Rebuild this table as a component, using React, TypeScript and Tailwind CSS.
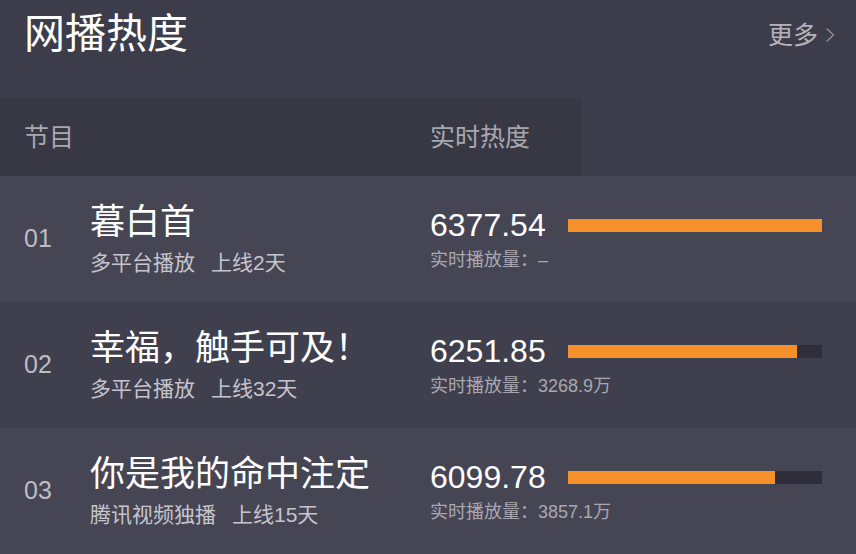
const items = [
  { rank: "01", title: "暮白首", platform: "多平台播放", days: "上线2天", score: "6377.54", plays: "–", pct: 100 },
  { rank: "02", title: "幸福，触手可及！", platform: "多平台播放", days: "上线32天", score: "6251.85", plays: "3268.9万", pct: 90 },
  { rank: "03", title: "你是我的命中注定", platform: "腾讯视频独播", days: "上线15天", score: "6099.78", plays: "3857.1万", pct: 81.5 },
]

const cjk = "font-['PingFang_SC','Liberation_Sans','Noto_Sans_CJK_SC',sans-serif]"

export default function App() {
  return (
    <div className={`w-[856px] h-[554px] bg-[#3d3c4a] flex flex-col overflow-hidden ${cjk}`}>
      <div className="h-[98px] flex items-start justify-between pl-6 pr-[21px]">
        <h1 className="mt-[12px] text-[41px] leading-[44px] text-white">网播热度</h1>
        <a className="mt-[20px] flex items-center text-[25px] leading-[30px] text-[#b4b3bc]">
          更多
          <svg className="ml-[7px]" width="10" height="16" viewBox="0 0 10 16" fill="none">
            <path d="M1.5 1.5 L8.5 8 L1.5 14.5" stroke="#8e8d97" strokeWidth="1.4" />
          </svg>
        </a>
      </div>

      <div className="w-[582px] h-[78px] bg-[#383744] border-t border-r border-[#3b3a47] flex items-center text-[25px] text-[#a9a8b1]">
        <span className="w-[430px] pl-6">节目</span>
        <span>实时热度</span>
      </div>

      {items.map((it, i) => (
        <div key={it.rank} className={`h-[126px] flex items-center ${i === 1 ? "bg-[#403f4d]" : "bg-[#464554]"}`}>
          <div className="w-[430px] flex items-center">
            <span className="w-[90px] pl-6 text-[25px] text-[#bdbcc4] font-['Liberation_Sans',sans-serif]">{it.rank}</span>
            <div className="flex flex-col gap-[8px]">
              <span className="text-[35px] leading-[40px] text-white">{it.title}</span>
              <span className="text-[21px] leading-[26px] text-[#c6c5cd]">
                {it.platform}
                <span className="ml-4">{it.days}</span>
              </span>
            </div>
          </div>
          <div className="flex flex-col gap-[6px]">
            <div className="flex items-center">
              <span className="w-[138px] text-[32px] leading-[36px] text-white font-['Liberation_Sans',sans-serif]">{it.score}</span>
              <div className="w-[254px] h-[13px] bg-[#2f2e3a]">
                <div className="h-full bg-[#f7902a]" style={{ width: `${it.pct}%` }} />
              </div>
            </div>
            <span className="text-[18px] leading-[22px] text-[#a9a8b1]">实时播放量：{it.plays}</span>
          </div>
        </div>
      ))}
    </div>
  )
}
